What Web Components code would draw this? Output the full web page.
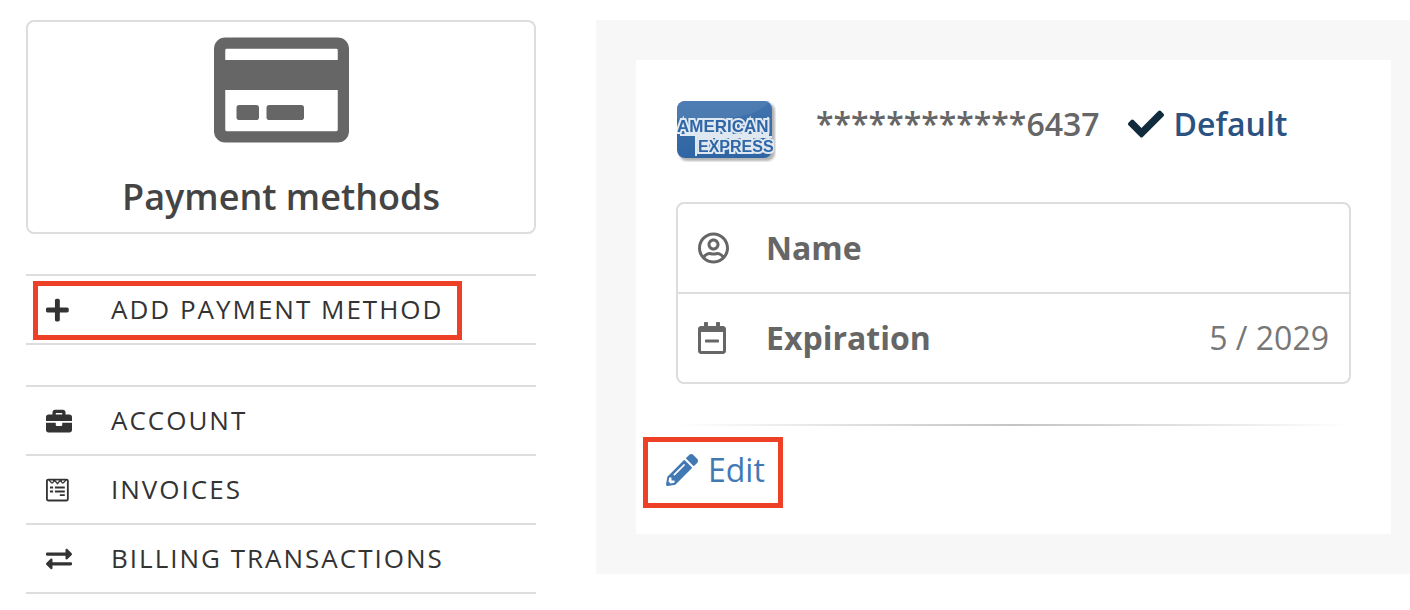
<!DOCTYPE html>
<html lang="en">
<head>
<meta charset="utf-8">
<meta name="viewport" content="width=device-width, initial-scale=1">
<title>Payment methods</title>
<style>
  body { margin: 0; background: #fff; color: #666; font-family: "Open Sans", "Noto Sans", sans-serif; font-size: 32px; line-height: 44px; }
</style>
</head>
<body>
<billing-page>
  <side-nav slot="side">
    <nav-group>
      <nav-item icon="plus" marked>Add payment method</nav-item>
    </nav-group>
    <nav-group>
      <nav-item icon="briefcase">Account</nav-item>
      <nav-item icon="invoice">Invoices</nav-item>
      <nav-item icon="transfer">Billing transactions</nav-item>
    </nav-group>
  </side-nav>
  <payment-card></payment-card>
</billing-page>

<script>
const ICONS = {
  card: ['0 0 576 512', '<path fill-rule="evenodd" d="M48 32H528a48 48 0 0 1 48 48V432a48 48 0 0 1-48 48H48a48 48 0 0 1-48-48V80a48 48 0 0 1 48-48zM54 80a6 6 0 0 0-6 6v42H528V86a6 6 0 0 0-6-6zM48 256V426a6 6 0 0 0 6 6H522a6 6 0 0 0 6-6V256z"/><rect x="96" y="320" width="96" height="64" rx="12"/><rect x="224" y="320" width="160" height="64" rx="12"/>'],
  plus: ['0 0 448 512', '<path d="M416 208H272V64c0-17.67-14.33-32-32-32h-32c-17.67 0-32 14.33-32 32v144H32c-17.67 0-32 14.33-32 32v32c0 17.67 14.33 32 32 32h144v144c0 17.67 14.33 32 32 32h32c17.67 0 32-14.33 32-32V304h144c17.67 0 32-14.33 32-32v-32c0-17.67-14.33-32-32-32z"/>'],
  briefcase: ['0 0 512 512', '<path d="M320 336c0 8.84-7.16 16-16 16h-96c-8.84 0-16-7.16-16-16v-48H0v144c0 25.6 22.4 48 48 48h416c25.6 0 48-22.4 48-48V288H320v48zm144-208h-80V80c0-25.6-22.4-48-48-48H176c-25.6 0-48 22.4-48 48v48H48c-25.6 0-48 22.4-48 48v80h512v-80c0-25.6-22.4-48-48-48zm-144 0H192V96h128v32z"/>'],
  invoice: ['0 0 448 512', '<g fill="none" stroke="currentColor"><rect x="18" y="50" width="412" height="412" rx="24" stroke-width="36"/><path d="M56 54l54 62h20l40-50 56 66 56-66 40 50h20l54-62M140 60l28 24M308 60l-28 24" stroke-width="26"/><path d="M78 206h62M176 206h194M78 286h62M176 286h194M272 358h98" stroke-width="36"/></g>'],
  transfer: ['0 0 512 512', '<path d="M0 168v-16c0-13.255 10.745-24 24-24h360V80c0-21.367 25.899-32.042 40.971-16.971l80 80c9.372 9.373 9.372 24.569 0 33.941l-80 80C409.956 271.982 384 261.456 384 240v-48H24c-13.255 0-24-10.745-24-24zm488 152H128v-48c0-21.314-25.862-32.08-40.971-16.971l-80 80c-9.372 9.373-9.372 24.569 0 33.941l80 80C102.057 463.997 128 453.437 128 432v-48h360c13.255 0 24-10.745 24-24v-16c0-13.255-10.745-24-24-24z"/>'],
  check: ['0 0 512 512', '<path d="M173.898 439.404l-166.4-166.4c-9.997-9.997-9.997-26.206 0-36.204l36.203-36.204c9.997-9.998 26.207-9.998 36.204 0L192 312.69 432.095 72.596c9.997-9.997 26.207-9.997 36.204 0l36.203 36.204c9.997 9.997 9.997 26.206 0 36.204l-294.4 294.401c-9.998 9.997-26.207 9.997-36.204-.001z"/>'],
  user: ['0 0 496 512', '<path d="M248 104c-53 0-96 43-96 96s43 96 96 96 96-43 96-96-43-96-96-96zm0 144c-26.5 0-48-21.5-48-48s21.5-48 48-48 48 21.5 48 48-21.5 48-48 48zm0-240C111 8 0 119 0 256s111 248 248 248 248-111 248-248S385 8 248 8zm0 448c-49.7 0-95.1-18.3-130.1-48.4 14.9-23 40.4-38.6 69.6-39.5 20.8 6.4 40.6 9.6 60.5 9.6s39.7-3.1 60.5-9.6c29.2 1 54.7 16.5 69.6 39.5-35 30.1-80.4 48.4-130.1 48.4zm162.7-84.1c-24.4-31.4-62.1-51.9-105.1-51.9-10.2 0-26 9.6-57.6 9.6-31.5 0-47.4-9.6-57.6-9.6-42.9 0-80.6 20.5-105.1 51.9C61.9 339.2 48 299.2 48 256c0-110.3 89.7-200 200-200s200 89.7 200 200c0 43.2-13.9 83.2-37.3 115.9z"/>'],
  calendar: ['0 0 448 512', '<path d="M124 328c-6.6 0-12-5.4-12-12v-24c0-6.6 5.4-12 12-12h200c6.6 0 12 5.4 12 12v24c0 6.6-5.4 12-12 12H124zm324-216v352c0 26.5-21.5 48-48 48H48c-26.5 0-48-21.5-48-48V112c0-26.5 21.5-48 48-48h48V12c0-6.6 5.4-12 12-12h40c6.6 0 12 5.4 12 12v52h128V12c0-6.6 5.4-12 12-12h40c6.6 0 12 5.4 12 12v52h48c26.5 0 48 21.5 48 48zm-48 346V160H48v298c0 3.3 2.7 6 6 6h340c3.3 0 6-2.7 6-6z"/>'],
  pencil: ['0 0 512 512', '<path d="M497.9 142.1l-46.1 46.1c-4.7 4.7-12.3 4.7-17 0l-111-111c-4.7-4.7-4.7-12.3 0-17l46.1-46.1c18.7-18.7 49.1-18.7 67.9 0l60.1 60.1c18.8 18.7 18.8 49.1 0 67.9zM284.2 99.8L21.6 362.4.4 483.9c-2.9 16.4 11.4 30.6 27.8 27.8l121.5-21.3 262.6-262.6c4.7-4.7 4.7-12.3 0-17l-111-111c-4.8-4.7-12.4-4.7-17.1 0zM124.1 339.9c-5.5-5.5-5.5-14.3 0-19.8l154-154c5.5-5.5 14.3-5.5 19.8 0s5.5 14.3 0 19.8l-154 154c-5.5 5.5-14.3 5.5-19.8 0zM88 424h48v36.3l-64.5 11.3-31.1-31.1L51.7 376H88v48z"/>']
};

class BaseElement extends HTMLElement {
  constructor() {
    super();
    this.attachShadow({ mode: 'open' });
  }
  connectedCallback() {
    this.shadowRoot.innerHTML = this.render();
  }
}

customElements.define('app-icon', class extends BaseElement {
  render() {
    const [box, shape] = ICONS[this.getAttribute('name')];
    return `<style>
      :host { display: block; flex: none; height: var(--icon-size, 32px); }
      svg { display: block; height: 100%; width: auto; fill: currentColor; }
    </style><svg viewBox="${box}" aria-hidden="true">${shape}</svg>`;
  }
});

/* Red frame laid over whatever it is placed in. */
customElements.define('marker-frame', class extends BaseElement {
  render() {
    return `<style>
      :host { display: block; position: absolute; box-sizing: border-box; border: 5px solid #ee4026; pointer-events: none; }
    </style>`;
  }
});

customElements.define('billing-page', class extends BaseElement {
  render() {
    return `<style>
      :host { display: block; padding: 20px 0 16px 26px; }
      .grid { display: grid; grid-template-columns: 510fr 814fr; gap: 60px; align-items: start; }
      main { background: #f7f7f7; padding: 40px 19px 40px 40px; min-width: 0; }
    </style>
    <div class="grid"><slot name="side"></slot><main><slot></slot></main></div>`;
  }
});

customElements.define('side-nav', class extends BaseElement {
  render() {
    return `<style>
      :host { display: flex; flex-direction: column; gap: 40px; min-width: 0; }
      header { display: flex; flex-direction: column; align-items: center; gap: 22px; padding: 8px 8px 10px; border: 2px solid #ddd; border-radius: 8px; }
      app-icon { --icon-size: 120px; }
      h1 { margin: 0; font-size: 36px; line-height: 50px; font-weight: 600; color: #444; }
      nav { display: flex; flex-direction: column; gap: 40px; }
    </style>
    <header><app-icon name="card"></app-icon><h1>Payment methods</h1></header>
    <nav aria-label="Billing"><slot></slot></nav>`;
  }
});

customElements.define('nav-group', class extends BaseElement {
  render() {
    return `<style>:host { display: block; border-top: 2px solid #ddd; }</style><slot></slot>`;
  }
});

customElements.define('nav-item', class extends BaseElement {
  render() {
    return `<style>
      :host { display: block; border-bottom: 2px solid #ddd; }
      a { position: relative; display: grid; grid-template-columns: 65px auto; justify-content: start; align-items: center; padding: 14px 20px; color: #333; text-decoration: none; text-transform: uppercase; letter-spacing: 2px; font-size: 26px; line-height: 39px; white-space: nowrap; }
      app-icon { --icon-size: 26px; }
      marker-frame { left: 7px; top: 5px; bottom: 3px; width: 429px; }
    </style>
    <a href="#"><app-icon name="${this.getAttribute('icon')}"></app-icon><span><slot></slot></span>${this.hasAttribute('marked') ? '<marker-frame></marker-frame>' : ''}</a>`;
  }
});

customElements.define('amex-logo', class extends BaseElement {
  render() {
    return `<style>:host { display: block; flex: none; } svg { display: block; }</style>
    <svg width="100" height="62" viewBox="0 0 100 62" role="img" aria-label="American Express">
      <defs>
        <linearGradient id="g" x1="0" y1="0" x2="0" y2="1"><stop offset="0" stop-color="#4174ae"/><stop offset="1" stop-color="#2f65a3"/></linearGradient>
        <clipPath id="c"><rect x="1" y="1" width="97" height="57" rx="8"/></clipPath>
        <filter id="b" x="-10%" y="-10%" width="120%" height="120%"><feGaussianBlur stdDeviation="1"/></filter>
        <filter id="s"><feGaussianBlur stdDeviation="0.7"/></filter>
      </defs>
      <rect x="3" y="3" width="96" height="58" rx="8" fill="#b4b4b4" filter="url(#b)"/>
      <rect x="1" y="1" width="95" height="57" rx="8" fill="url(#g)"/>
      <g clip-path="url(#c)">
        <path d="M1 1H94Q82 18 38 19H1z" fill="#5682b4" opacity=".6"/>
        <g filter="url(#s)" font-family="Liberation Sans, Arial, sans-serif" font-weight="700" fill="#2f66a6" stroke="#dfe8f1" stroke-width="4" paint-order="stroke" stroke-linejoin="miter">
          <path d="M92 17V35H4M20 56V37H96" fill="none" stroke-width="2"/>
          <text x="1" y="32" font-size="17">AMERICAN</text>
          <text x="22" y="52" font-size="16">EXPRESS</text>
        </g>
      </g>
    </svg>`;
  }
});

customElements.define('card-details', class extends BaseElement {
  render() {
    return `<style>
      :host { display: block; border: 2px solid #ddd; border-radius: 8px; }
      table { width: 100%; border-spacing: 0; }
      th, td { padding: 22px 20px; }
      tr + tr > * { border-top: 2px solid #ddd; }
      th { text-align: left; font-weight: 700; }
      td { text-align: right; color: #777; }
      .label { display: grid; grid-template-columns: 68px auto; align-items: center; justify-content: start; }
    </style>
    <table>
      <tr><th scope="row"><div class="label"><app-icon name="user"></app-icon>Name</div></th><td></td></tr>
      <tr><th scope="row"><div class="label"><app-icon name="calendar"></app-icon>Expiration</div></th><td>5 / 2029</td></tr>
    </table>`;
  }
});

customElements.define('payment-card', class extends BaseElement {
  render() {
    return `<style>
      :host { display: block; background: #fff; padding: 40px; }
      .summary { display: flex; align-items: center; gap: 40px; height: 62px; margin-bottom: 40px; }
      .number { font-weight: 600; display: flex; gap: 28px; align-items: center; line-height: 46px; padding-bottom: 14px; }
      .default { display: flex; align-items: center; gap: 10px; color: #2b5280; }
      .default app-icon { --icon-size: 36px; color: #0f2b3d; }
      hr { height: 2px; margin: 40px 0 20px; border: 0; background: linear-gradient(to right, transparent, #c4c4c4, transparent); }
      .edit { position: relative; display: inline-flex; align-items: center; gap: 10px; margin-left: -10px; height: 48px; vertical-align: top; color: #4279b5; text-decoration: none; }
      marker-frame { left: -23px; right: -18px; top: -9px; bottom: -14px; }
    </style>
    <div class="summary">
      <amex-logo></amex-logo>
      <div class="number"><span>************6437</span><span class="default"><app-icon name="check"></app-icon>Default</span></div>
    </div>
    <card-details></card-details>
    <hr>
    <a class="edit" href="#"><app-icon name="pencil"></app-icon>Edit<marker-frame></marker-frame></a>`;
  }
});
</script>
</body>
</html>
